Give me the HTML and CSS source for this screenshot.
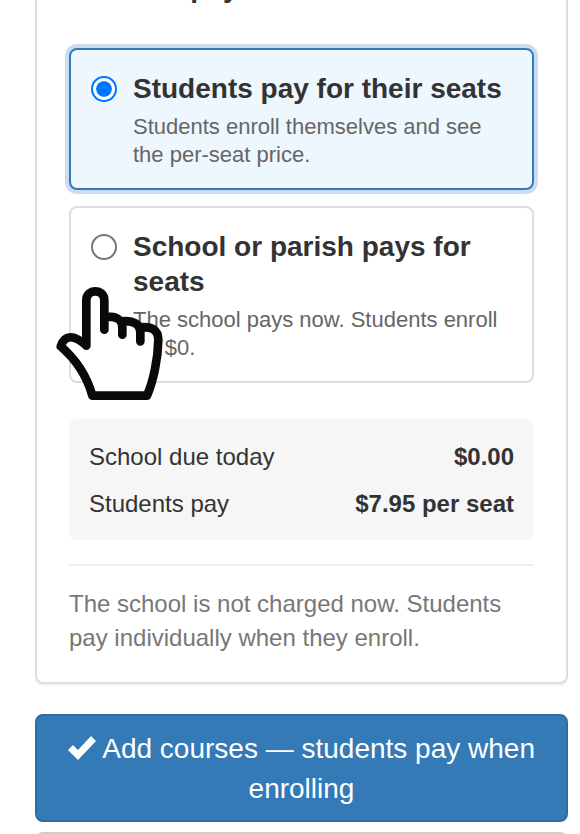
FILE: index.html
```html
<!DOCTYPE html>
<html lang="en">
<head>
    <meta charset="UTF-8">
    <meta name="viewport" content="width=device-width, initial-scale=1.0">
    <title>Add courses</title>
    <link rel="stylesheet" href="styles.css">
</head>
<body>
    <form class="page">
        <div class="card">
            <h2 class="card-title" id="payTitle">Who will pay?</h2>

            <!-- Payment options -->
            <div class="options" role="radiogroup" aria-labelledby="payTitle">
                <label class="option selected">
                    <input type="radio" name="payer" value="students" checked>
                    <span class="option-text">
                        <strong>Students pay for their seats</strong>
                        <small>Students enroll themselves and see the per-seat price.</small>
                    </span>
                </label>

                <label class="option">
                    <input type="radio" name="payer" value="school">
                    <span class="option-text">
                        <strong>School or parish pays for seats</strong>
                        <small>The school pays now. Students enroll for $0.</small>
                    </span>
                    <svg class="hand" viewBox="0 0 390 390" aria-hidden="true">
                        <path d="M124 197V48C124 26 137 34 151 34C165 34 178 26 178 48V110C206 106 228 112 232 124C258 120 280 126 286 142C318 138 340 146 340 178C340 240 322 310 305 347H142C125 290 90 235 47 199C60 160 85 165 124 197Z" fill="#fff" stroke="none"/>
                        <path d="M124 197V61C124 25 178 25 178 61V149M178 110C210 108 232 116 232 142V164M232 124C264 120 286 132 286 156V184M286 142C320 138 340 150 340 180C339 240 324 306 306 347H142C126 290 90 236 47 199C60 162 88 164 124 197"/>
                    </svg>
                </label>
            </div>

            <!-- Totals -->
            <dl class="summary">
                <div class="row">
                    <dt>School due today</dt>
                    <dd>$0.00</dd>
                </div>
                <div class="row">
                    <dt>Students pay</dt>
                    <dd>$7.95 per seat</dd>
                </div>
            </dl>

            <p class="note">The school is not charged now. Students pay individually when they enroll.</p>
        </div>

        <button type="submit" class="submit-button"><svg class="check" viewBox="0 0 28 24" aria-hidden="true"><path d="M0 14L5 9L10 14L23 0L28 5L10 24Z"/></svg> Add courses — students pay when enrolling</button>
        <div class="next-panel"></div>
    </form>
</body>
</html>
```
FILE: styles.css
```css
* {
    box-sizing: border-box;
}
body {
    margin: 0;
    background-color: #fff;
    color: #333;
    font-family: "Liberation Sans", Arial, sans-serif;
    font-size: 24px;
    line-height: 34px;
}
.page {
    height: 100vh;
    overflow: hidden;
    padding: 0 12px 0 35px;
}
.card {
    margin-top: -64px; /* the page is scrolled past the card's top */
    padding: 32px 32px 27px;
    background-color: #fff;
    border: 2px solid #ddd;
    border-radius: 8px;
    box-shadow: 0 2px 2px rgba(0, 0, 0, 0.05);
}
.card-title {
    margin: 0 0 43px;
    font-size: 28px;
    line-height: 35px;
}
.options {
    display: flex;
    flex-direction: column;
    gap: 16px;
}
.option {
    position: relative;
    display: flex;
    gap: 16px;
    padding: 21px 20px 19px;
    border: 2px solid #ddd;
    border-radius: 8px;
    cursor: pointer;
}
.option.selected {
    background-color: #eef7fd;
    border-color: #337ab7;
    box-shadow: 0 0 0 4px #ccdcef;
}
.option input {
    appearance: none;
    flex: none;
    width: 26px;
    height: 26px;
    margin: 5px 0 0;
    background-color: #fff;
    border: 2px solid #767676;
    border-radius: 50%;
}
.option input:checked {
    padding: 3px;
    background-color: #0075ff;
    background-clip: content-box;
    border-color: #0075ff;
    box-shadow: inset 0 0 0 3px #fff;
}
.option-text {
    display: flex;
    flex-direction: column;
    gap: 7px;
}
.option strong {
    font-size: 28px;
    line-height: 35px;
}
.option small {
    color: #666;
    font-size: 22px;
    line-height: 28px;
}
.hand {
    position: absolute;
    left: -26px;
    top: 72px;
    width: 130px;
    height: 130px;
    fill: none;
    stroke: #090909;
    stroke-width: 26px;
    stroke-linecap: round;
    stroke-linejoin: round;
    pointer-events: none;
}
.summary {
    display: flex;
    flex-direction: column;
    gap: 13px;
    margin: 36px 0 24px;
    padding: 21px 20px 19px;
    background-color: #f6f6f6;
    border-radius: 8px;
}
.row {
    display: flex;
    justify-content: space-between;
}
.row dd {
    margin: 0;
    font-weight: bold;
}
.note {
    margin: 0;
    padding-top: 21px;
    border-top: 2px solid #eee;
    color: #777;
}
.submit-button {
    display: block;
    width: 100%;
    margin-top: 30px;
    padding: 13px 24px 11px;
    background-color: #337ab7;
    border: 2px solid #2e6da4;
    border-radius: 8px;
    color: #fff;
    font-family: inherit;
    font-size: 28px;
    line-height: 40px;
    cursor: pointer;
}
.check {
    width: 28px;
    height: 24px;
    fill: #fff;
    vertical-align: -2px;
}
.next-panel {
    height: 60px;
    margin-top: 10px;
    border: 2px solid #ccc;
    border-radius: 8px;
}
```
